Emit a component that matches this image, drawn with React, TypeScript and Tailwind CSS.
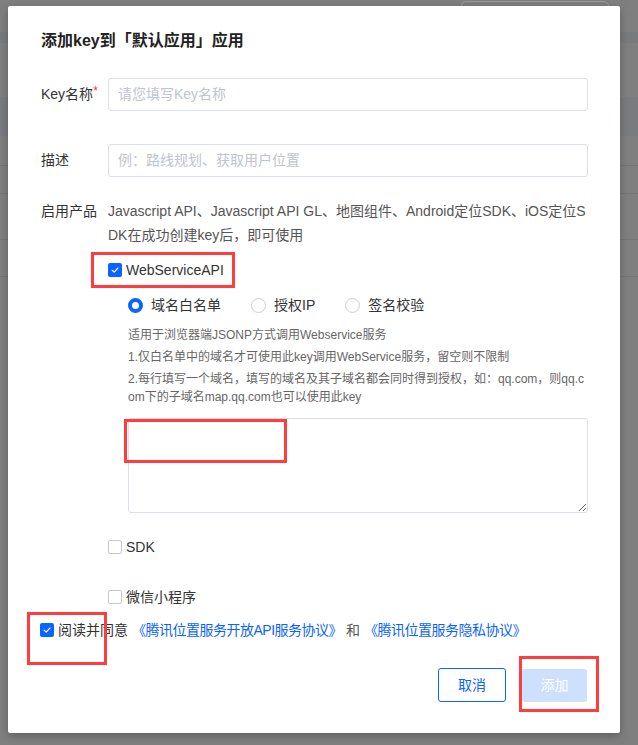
import React from "react";

const font = "font-['Liberation_Sans','Noto_Sans_CJK_SC',sans-serif]";

function CheckBox({ checked }: { checked?: boolean }) {
  if (checked) {
    return (
      <span className="flex h-[14px] w-[14px] shrink-0 items-center justify-center rounded-[2px] bg-[#0a64ff]">
        <svg viewBox="0 0 12 12" className="h-[10px] w-[10px]" fill="none">
          <path d="M2.5 6.2 5 8.6 9.6 3.6" stroke="#fff" strokeWidth="1.4" strokeLinecap="round" strokeLinejoin="round" />
        </svg>
      </span>
    );
  }
  return <span className="h-[14px] w-[14px] shrink-0 rounded-[2px] border border-[#c8c8c8] bg-white" />;
}

function Radio({ checked, label }: { checked?: boolean; label: string }) {
  return (
    <div className="flex items-center gap-[8px]">
      {checked ? (
        <span className="h-[15px] w-[15px] rounded-full border-[4px] border-[#0a64ff] bg-white" />
      ) : (
        <span className="h-[15px] w-[15px] rounded-full border border-[#cfcfcf] bg-white" />
      )}
      <span className="text-[14px] text-[#333]">{label}</span>
    </div>
  );
}

function RedBox({ className }: { className: string }) {
  return <div className={"pointer-events-none absolute border-[3px] border-[#ff3d3d] " + className} />;
}

export default function App() {
  return (
    <div className={"relative h-[745px] w-full overflow-hidden bg-[#7f7f7f] " + font}>
      {/* page behind the overlay */}
      <div className="flex flex-col">
        <div className="h-[32px]" />
        <div className="h-[11px] bg-[#797a7c]" />
        <div className="h-[54px]" />
        <div className="h-[39px] bg-[#7a7b7e]" />
        <div className="h-[29px]" />
        <div className="h-px bg-[#757575]" />
        <div className="h-[27px]" />
        <div className="h-px bg-[#757575]" />
        <div className="h-[45px]" />
        <div className="h-px bg-[#757575]" />
        <div className="h-[36px]" />
        <div className="h-px bg-[#757575]" />
      </div>
      <div className="absolute left-[461px] top-[1px] h-[40px] w-[148px] rounded-[5px] border border-[#9b9b9b]" />

      {/* modal */}
      <div className="absolute left-[8px] top-[6px] flex h-[727px] w-[612px] flex-col rounded-[2px] bg-white pl-[33px] pr-[32px] pt-[23px] shadow-[0_3px_8px_rgba(0,0,0,0.25)]">
        <h2 className="text-[16px] font-bold leading-[24px] text-[#222]">添加key到「默认应用」应用</h2>

        <div className="mt-[25px] flex items-center">
          <label className="w-[67px] shrink-0 text-[14px] text-[#333]">
            Key名称<span className="relative -top-[4px] text-[#f33] text-[12px]">*</span>
          </label>
          <div className="flex h-[33px] flex-1 items-center rounded-[3px] border border-[#dcdfe6] px-[9px] text-[14px] text-[#c0c4cc]">
            请您填写Key名称
          </div>
        </div>

        <div className="mt-[33px] flex items-center">
          <label className="w-[67px] shrink-0 text-[14px] text-[#333]">描述</label>
          <div className="flex h-[33px] flex-1 items-center rounded-[3px] border border-[#dcdfe6] px-[9px] text-[14px] text-[#c0c4cc]">
            例：路线规划、获取用户位置
          </div>
        </div>

        <div className="mt-[22px] flex items-start">
          <label className="w-[67px] shrink-0 text-[14px] leading-[24px] text-[#333]">启用产品</label>
          <p className="flex-1 break-all text-[14px] leading-[24px] text-[#555]">
            Javascript API、Javascript API GL、地图组件、Android定位SDK、iOS定位SDK在成功创建key后，即可使用
          </p>
        </div>

        <div className="ml-[67px] mt-[11px] flex h-[24px] items-center gap-[4px]">
          <CheckBox checked />
          <span className="text-[14px] text-[#333]">WebServiceAPI</span>
        </div>

        <div className="ml-[87px] mt-[13px] flex h-[20px] items-center gap-[30px]">
          <Radio checked label="域名白名单" />
          <Radio label="授权IP" />
          <Radio label="签名校验" />
        </div>

        <div className="ml-[87px] mt-[11px] break-all text-[12px] leading-[18px] text-[#666]">
          <p>适用于浏览器端JSONP方式调用Webservice服务</p>
          <p className="mt-[4px]">1.仅白名单中的域名才可使用此key调用WebService服务，留空则不限制</p>
          <p className="mt-[4px]">
            2.每行填写一个域名，填写的域名及其子域名都会同时得到授权，如：qq.com，则qq.com下的子域名map.qq.com也可以使用此key
          </p>
        </div>

        <textarea
          readOnly
          className="ml-[87px] mt-[12px] h-[95px] w-[460px] rounded-[3px] border border-[#dcdfe6] outline-none"
        />

        <div className="ml-[67px] mt-[24px] flex h-[20px] items-center gap-[4px]">
          <CheckBox />
          <span className="text-[14px] text-[#333]">SDK</span>
        </div>

        <div className="ml-[67px] mt-[30px] flex h-[20px] items-center gap-[4px]">
          <CheckBox />
          <span className="text-[14px] text-[#333]">微信小程序</span>
        </div>

        <div className="-ml-[1px] mt-[13px] flex h-[20px] items-center gap-[4px] text-[14px]">
          <CheckBox checked />
          <span className="text-[#333]">阅读并同意</span>
          <a className="tracking-[-0.5px] text-[#0a64ff]">《腾讯位置服务开放API服务协议》</a>
          <span className="text-[#555]">和</span>
          <a className="tracking-[-0.5px] text-[#0a64ff]">《腾讯位置服务隐私协议》</a>
        </div>

        <div className="mr-[1px] mt-[28px] flex items-center justify-end gap-[16px]">
          <button className="h-[34px] w-[68px] rounded-[3px] border border-[#0a64ff] bg-white text-[14px] text-[#0a64ff]">
            取消
          </button>
          <button className="h-[33px] w-[65px] rounded-[3px] bg-[#cde0fd] text-[14px] text-white">添加</button>
        </div>
      </div>

      {/* annotation boxes */}
      <RedBox className="left-[91px] top-[252px] h-[36px] w-[144px]" />
      <RedBox className="left-[124px] top-[419px] h-[44px] w-[163px]" />
      <RedBox className="left-[27px] top-[612px] h-[53px] w-[80px]" />
      <RedBox className="left-[519px] top-[656px] h-[56px] w-[80px]" />
    </div>
  );
}
